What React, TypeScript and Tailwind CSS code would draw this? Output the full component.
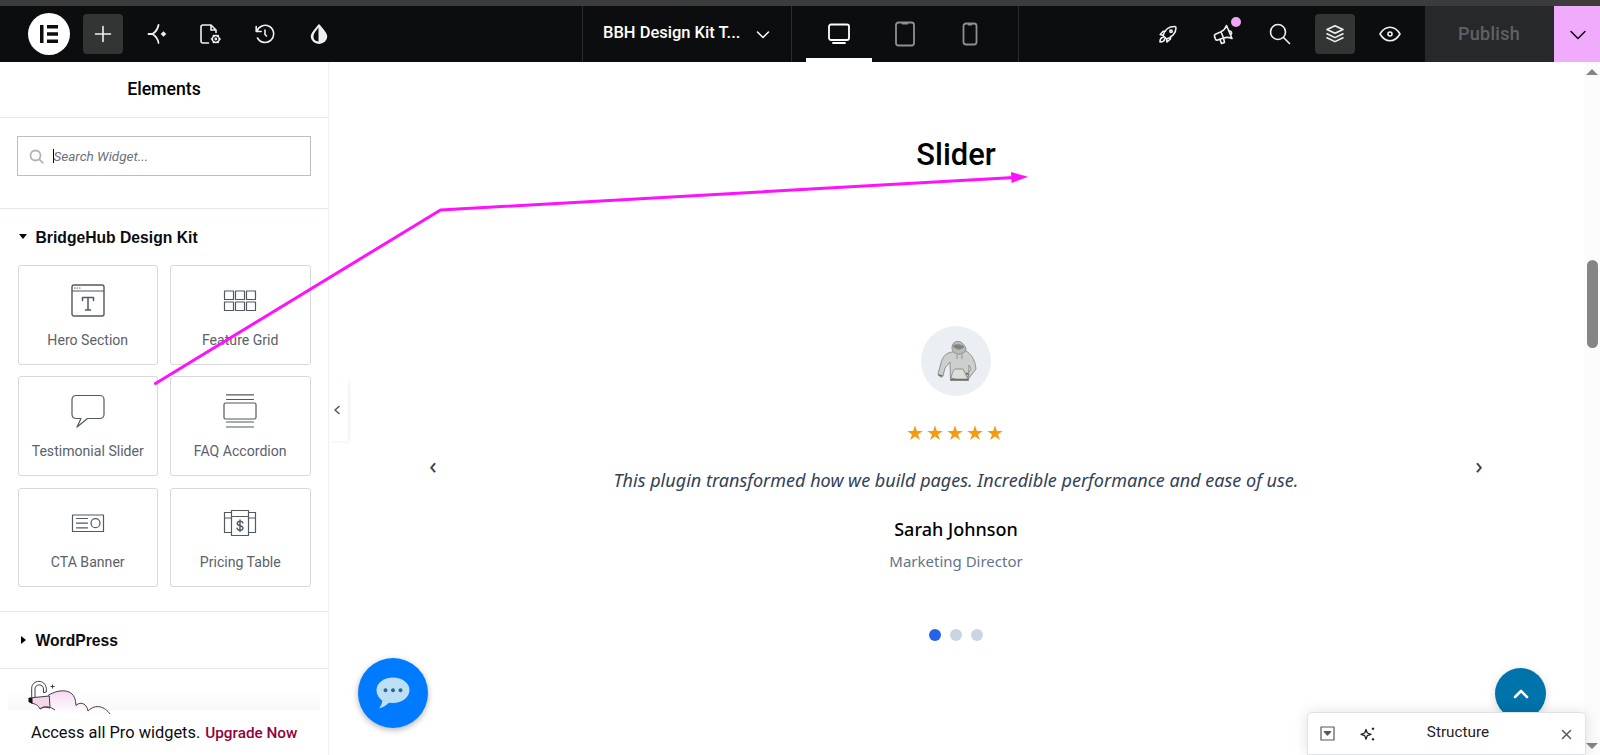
import type { ReactNode } from "react";
import clsx from "clsx";

type IconProps = { className?: string; children: ReactNode; size: number; stroke?: number };

function Icon({ className, children, size, stroke = 1.5 }: IconProps) {
  return (
    <svg
      width={size}
      height={size}
      viewBox={`0 0 ${size} ${size}`}
      fill="none"
      stroke="currentColor"
      strokeWidth={stroke}
      strokeLinecap="round"
      strokeLinejoin="round"
      className={clsx("shrink-0", className)}
      aria-hidden="true"
    >
      {children}
    </svg>
  );
}

const widgets: { title: string; icon: ReactNode }[] = [
  {
    title: "Hero Section",
    icon: (
      <>
        <rect x="1" y="2" width="32" height="31" rx="2" strokeWidth="1.4" />
        <path d="M1 8h32" />
        <path d="M3.5 5h.5M6 5h.5M8.5 5h.5" />
        <path d="M11.500 17.500v-3h11v3M17 14.500v12.500M14.500 27h5" strokeWidth="1.5" />
      </>
    ),
  },
  {
    title: "Feature Grid",
    icon: (
      <>
        <path d="M1.500 8h9v8.500h-9zM12.500 8h9v8.500h-9zM23.500 8h9v8.500h-9z" />
        <path d="M1.500 19h9v8.500h-9zM12.500 19h9v8.500h-9zM23.500 19h9v8.500h-9z" />
      </>
    ),
  },
  {
    title: "Testimonial Slider",
    icon: <path d="M5 1.500h24a4 4 0 0 1 4 4v15a4 4 0 0 1-4 4H16.500L6 33l4-8.500H5a4 4 0 0 1-4-4v-15a4 4 0 0 1 4-4z" />,
  },
  {
    title: "FAQ Accordion",
    icon: (
      <>
        <path d="M3.500.8h27M3.500 5.500h27M3.500 28h27M3.500 33h27" />
        <rect x="1" y="9" width="32" height="16" rx="1.5" />
      </>
    ),
  },
  {
    title: "CTA Banner",
    icon: (
      <>
        <path d="M1.500 9h31v16.500h-31z" />
        <path d="M5.500 12.500h11M5.500 17.200h11M5.500 21.800h11" />
        <circle cx="24.5" cy="17.200" r="4.500" />
      </>
    ),
  },
  {
    title: "Pricing Table",
    icon: (
      <>
        <path d="M8.500 4.500h17v25h-17zM8.500 10.500h17" />
        <path d="M8.500 6.500h-7v20h7M1.500 12h7M25.500 6.500h7v20h-7M25.500 12h7" />
        <path
          d="M20 17c-.5-1.200-1.500-1.700-3-1.700s-2.800.8-2.800 2.200c0 3 5.800 1.500 5.800 4.500 0 1.500-1.300 2.200-3 2.200s-2.700-.7-3-2M17 14v11.500"
          strokeWidth="1.400"
        />
      </>
    ),
  },
];

function ToolButton({ active, children, className }: { active?: boolean; children: ReactNode; className?: string }) {
  return (
    <button
      className={clsx("relative flex size-10 items-center justify-center rounded text-[#f0f0f0]", active && "bg-[#333434]", className)}
    >
      {children}
    </button>
  );
}

function TopBar() {
  return (
    <header className="flex h-[62px] shrink-0 border-t-[6px] border-[#3b3c3b] bg-[#0c0d0e]">
      <div className="flex w-[582px] items-center pl-7">
        <div className="mb-px mr-[13px] mt-px flex size-[42px] items-center justify-center rounded-full bg-white">
          <svg width="18" height="18" viewBox="0 0 18 18" fill="#0c0d0e" aria-hidden="true">
            <path d="M0 0h3.500v18H0zM7 0h11v3.500H7zM7 7.200h11v3.500H7zM7 14.400h11V18H7z" />
          </svg>
        </div>
        <ToolButton active className="mr-[14px]">
          <Icon size={18} stroke={1.600}>
            <path d="M9 1.500v15M1.500 9h15" />
          </Icon>
        </ToolButton>
        <ToolButton className="mr-[13px]">
          <Icon size={20} stroke={1.800}>
            <path d="M11.500 1C10.800 5 8.500 8 5.500 10c3.200 2 5.500 5 6 9M1.500 10h4" />
            <path d="M16.500 7.200 19.300 10l-2.800 2.800-2.800-2.800z" fill="currentColor" stroke="none" />
          </Icon>
        </ToolButton>
        <ToolButton className="mr-[15px]">
          <Icon size={22} stroke={1.600}>
            <path d="M9.500 20H4a2 2 0 0 1-2-2V4a2 2 0 0 1 2-2h8l5 5v2.500M12 2v5h5" />
            <circle cx="16.800" cy="16" r="3.500" />
            <circle cx="16.800" cy="16" r=".6" />
            <path d="M14.500 12.500l.6.9M19.100 12.500l-.6.900M12.500 16h.8M20.300 16h.9M14.500 19.500l.6-.9M19.100 19.500l-.6-.9" />
          </Icon>
        </ToolButton>
        <ToolButton className="mr-[14px]">
          <Icon size={20} stroke={1.600}>
            <path d="M1.800 7.500A8.600 8.600 0 1 1 2.500 14M1.200 2.500v5h5M10 6v4.500l1.500 1.500" />
          </Icon>
        </ToolButton>
        <ToolButton>
          <Icon size={20} stroke={1.500}>
            <path d="M10 1C7.500 4.500 2.500 8.500 2.500 12.500a7.500 6.700 0 0 0 15 0C17.500 8.500 12.500 4.500 10 1z" fill="currentColor" />
            <path d="M9.500 3.500C7.500 6.500 4.500 9 4.500 12.500a5.500 5 0 0 0 5 5z" fill="#0c0d0e" stroke="none" />
          </Icon>
        </ToolButton>
      </div>

      <div className="flex w-[209px] items-center border-l border-[#2b2c2d] pb-px pl-5">
        <span className="w-[140px] whitespace-nowrap text-[16.500px] font-medium text-white">BBH Design Kit T...</span>
        <Icon size={14} className="ml-[13px] mt-0.5 text-white">
          <path d="m1.500 4 5.500 5.500L12.500 4" />
        </Icon>
      </div>

      <div className="flex w-[228px] border-x border-[#2b2c2d] pl-[14px] text-[#8f9091]">
        <button className="flex w-[66px] items-center justify-center border-b-4 border-white pt-1 text-white">
          <Icon size={24} stroke={1.800}>
            <rect x="2" y="2.500" width="20" height="15.500" rx="2" />
            <path d="M6 21h12" />
          </Icon>
        </button>
        <button className="flex w-[65px] items-center justify-center">
          <Icon size={26} stroke={1.800}>
            <rect x="4" y="1.500" width="18" height="23" rx="2.500" />
            <path d="M10.500 2.500h5" />
          </Icon>
        </button>
        <button className="flex w-[66px] items-center justify-center">
          <Icon size={24} stroke={1.800}>
            <rect x="5.500" y="1.500" width="13" height="21" rx="2.500" />
            <path d="M10.500 2.500h3" />
          </Icon>
        </button>
      </div>

      <div className="flex flex-1 items-center justify-end gap-[15px] pr-[15px]">
        <ToolButton>
          <Icon size={20} stroke={1.600}>
            <path d="M5 11.500C6.500 6.500 10.500 2.500 16.500 2.500c1 0 1.500.5 1.500 1.500 0 5-4 9.500-9.500 11zM7.500 7.200H5.200L2.200 10.500l2.800 1M12.500 12.500v2.300L9 18l-.5-3M5 13.500C2.500 13.500 2 15.500 2 18c2.500 0 4.500-.5 4.500-3" />
            <circle cx="13" cy="7.300" r="1.200" />
          </Icon>
        </ToolButton>
        <ToolButton className="ml-px">
          <Icon size={22} stroke={1.600}>
            <path d="m13.500 2.500 5.500 13c-3-1.500-5.500-1.500-8.500-.5l-5.800 2c-1 .3-1.800 0-2.200-.9l-1-2.700c-.3-1 0-1.800.9-2.200L8 8.800c2.800-1.300 4.500-3.300 5.500-6.300zM8 8.800l2.500 6.200M7 16.500l1.500 4 3-1L10.500 15M16.500 8c1.800-.3 2.800 2.200 1.500 3.300" />
          </Icon>
          <span className="absolute right-[3px] top-[3px] size-2.5 rounded-full bg-[#f0a5f7]" />
        </ToolButton>
        <ToolButton className="ml-px">
          <Icon size={22} stroke={1.600}>
            <circle cx="9" cy="9" r="7.500" />
            <path d="m14.500 14.500 6 6" />
          </Icon>
        </ToolButton>
        <ToolButton active>
          <Icon size={20} stroke={1.600}>
            <path d="m10 1.800 8 3.700-8 3.700-8-3.700zM2 9.800l8 3.800 8-3.800M2 13.800l8 3.800 8-3.800" />
          </Icon>
        </ToolButton>
        <ToolButton>
          <Icon size={22} stroke={1.600}>
            <path d="M1 11c5.500-9 14.500-9 20 0-5.500 9-14.500 9-20 0z" />
            <circle cx="11" cy="11" r="2" />
          </Icon>
        </ToolButton>
      </div>

      <button className="flex w-[129px] items-center justify-center bg-[#27282a] pb-px pr-px text-[18px] font-medium tracking-[.3px] text-[#5f6266]">
        Publish
      </button>
      <button className="flex w-[46px] items-center justify-center bg-[#f0abfc] pl-0.5 text-[#0c0d0e]">
        <Icon size={18}>
          <path d="m2 6.500 7 7 7-7" />
        </Icon>
      </button>
    </header>
  );
}

function Cloud() {
  return (
    <svg width="86" height="38" viewBox="0 0 86 38" fill="none" stroke="#403b48" strokeWidth="1" className="relative z-10" aria-hidden="true">
      <defs>
        <linearGradient id="cloud" x1="0" y1="10" x2="0" y2="34" gradientUnits="userSpaceOnUse">
          <stop offset="0" stopColor="#f6d5f1" />
          <stop offset=".45" stopColor="#fbeaf8" />
          <stop offset="1" stopColor="#fff" />
        </linearGradient>
      </defs>
      <path d="M21 15.500c11-7 26-7 27.500 6l.5 4c5-5 11-1 12 5.500 8-8 17-4 22 3-20 4-42 3-60-5z" fill="url(#cloud)" stroke="none" />
      <path d="M21 15.500c11-7 26-7 27.500 6l.5 4c5-5 11-1 12 5.500 8-8 17-4 22 3" />
      <path d="m2 18 20.300-2 .7 12-5-1c-2 0-3.500.500-5 2-1.500-4-5-5-8.500-6z" fill="#f3d6ea" />
      <path d="M1.500 18h4v6l-4-2z" fill="#111" stroke="none" />
      <path d="M4.700 17.500V8.500c0-9.500 14-9.500 14.600 0V12l-2.800.7V9c0-5.500-8.500-5.500-8.500 0v8.200M13 29c4-2.500 9-3.500 15 1" />
      <path d="M25.500 4.500v4M23.500 6.500h4" />
    </svg>
  );
}

function Panel() {
  return (
    <aside className="relative z-10 flex w-[329px] shrink-0 flex-col border-r border-[#f0f1f1] bg-white">
      <h1 className="h-[56px] shrink-0 border-b border-[#e9eaec] pt-[15px] text-center text-[17.700px] font-medium leading-6 text-black">
        Elements
      </h1>
      <div className="h-[91px] shrink-0 border-b border-[#e4e8e9] px-[17.500px] pt-[18px]">
        <div className="-ml-px flex h-10 items-center border border-[#babfc3] pl-[11px]">
          <Icon size={15} stroke={1.800} className="text-[#b0b4b9]">
            <circle cx="6.500" cy="6.500" r="5" />
            <path d="m10.300 10.300 3.500 3.500" />
          </Icon>
          <span className="ml-[9px] h-3.5 border-l border-black text-[13.500px] italic leading-[14px] text-[#6d7278]">
            Search Widget...
          </span>
        </div>
      </div>

      <section className="h-[403px] shrink-0 border-b border-[#e4e8e9] pl-[17.500px] pr-[17.500px]">
        <h2 className="flex h-[56px] items-center pt-px font-['Liberation_Sans',Arial,sans-serif] text-[15.700px] font-bold text-[#0c0d0e]">
          <span className="mb-0.5 ml-px mr-[9px] border-x-4 border-t-[5px] border-x-transparent border-t-black" />
          BridgeHub Design Kit
        </h2>
        <div className="grid grid-cols-2 gap-x-3 gap-y-[11.800px]">
          {widgets.map((widget) => (
            <button
              key={widget.title}
              className="flex h-[99.500px] flex-col items-center rounded-[3px] border border-[#d5d8dc] pt-[17.200px] text-[#515962]"
            >
              <Icon size={34} stroke={1.200}>
                {widget.icon}
              </Icon>
              <span className="mt-[12.500px] whitespace-nowrap text-[14.100px] leading-5 text-[#5b626a]">{widget.title}</span>
            </button>
          ))}
        </div>
      </section>

      <h2 className="flex h-[57px] shrink-0 items-center border-b border-[#e4e8e9] pl-[17.500px] pt-px font-['Liberation_Sans',Arial,sans-serif] text-[15.700px] font-bold text-[#0c0d0e]">
        <span className="mb-0.5 ml-[3px] mr-[10px] border-y-4 border-l-[5px] border-y-transparent border-l-black" />
        WordPress
      </h2>

      <div className="h-[41px] shrink-0 px-2">
        <div className="h-full bg-linear-to-b from-white from-50% to-[#f8f8f8] pl-[19px] pt-[11px]">
          <Cloud />
        </div>
      </div>
      <p className="flex h-[45px] items-center whitespace-nowrap bg-white pl-[31px] text-[16.400px] leading-5 text-[#0c0d0e]">
        Access all Pro widgets.
        <b className="ml-[5px] mt-px text-[15.300px] font-medium text-[#93003c]">Upgrade Now</b>
      </p>

      <button className="absolute left-[329px] top-[319px] flex h-[60px] w-[19px] items-center justify-center bg-white pb-0.5 pr-[3px] text-[#515962] shadow-[2px_1px_3px_rgba(0,0,0,.06)]">
        <Icon size={10} stroke={1.600}>
          <path d="M7 1.500 3 5l4 3.500" />
        </Icon>
      </button>
    </aside>
  );
}

function Hoodie() {
  return (
    <svg width="70" height="70" viewBox="0 0 70 70" stroke="#8f918e" strokeWidth="1" strokeLinejoin="round" aria-hidden="true">
      <path d="M31 26c-6 1-9 4-11 11l-3 11c1 3 4 4 5 2l2-8 5-6 .500 18.500h18l.500-15.500 2 4-5 6 3 3 7-9c-1-10-5-15-10-18z" fill="#cdcfcc" />
      <path d="M31 22c0-9 11-9 14 1 0 3-3 4-6 5-4 1-8-2-8-6z" fill="#b9bbb8" />
      <path d="M32 20c3-2 8-2 11 1-3 3-8 3-11-1z" fill="#7d807c" />
      <path d="M30 52c1-4 2-8 4-9h8l3 6 2 4c-5 1-12 1-17-1z" fill="#dcdedb" />
      <path d="M36 29v4M41 28v5" fill="none" />
      <path d="M29.500 53.500h18M17.500 49l4 1M45 47l3 2" fill="none" stroke="#6c6f6b" strokeWidth="1.500" />
    </svg>
  );
}

function Canvas() {
  return (
    <main className="flex flex-1 flex-col items-center bg-white pr-px font-['Noto_Sans','Open_Sans',sans-serif]">
      <h2 className="pt-[75px] font-[Roboto,sans-serif] text-[30.900px] font-medium leading-9 text-black">Slider</h2>
      <div className="mt-[153px] flex w-full items-center px-[99px]">
        <button className="mt-[30px] w-[10px] text-[24px] leading-6 text-[#334155]">‹</button>
        <div className="flex flex-1 flex-col items-center">
          <div className="flex size-[70px] items-center justify-center rounded-full bg-[#ebeff3]">
            <Hoodie />
          </div>
          <div className="mr-0.5 mt-[29px] flex gap-1 text-[#f79a10]">
            {[0, 1, 2, 3, 4].map((i) => (
              <svg key={i} width="16" height="16" viewBox="0 0 16 16" fill="currentColor" aria-hidden="true">
                <path d="m8 .3 1.900 5.600h5.900L11 9.400l1.900 5.700L8 11.600l-4.900 3.500L5 9.400.2 5.900h5.900z" />
              </svg>
            ))}
          </div>
          <p className="mt-6 whitespace-nowrap text-[18.050px] italic leading-[30px] text-[#334155]">
            This plugin transformed how we build pages. Incredible performance and ease of use.
          </p>
          <p className="mt-[22px] text-[18px] font-medium leading-6 text-black">Sarah Johnson</p>
          <p className="mt-2 text-[15px] leading-6 text-[#64748b]">Marketing Director</p>
        </div>
        <button className="mt-[30px] w-[10px] text-[24px] leading-6 text-[#334155]">›</button>
      </div>
      <div className="mt-14 flex gap-[9px]">
        <span className="size-3 rounded-full bg-[#2563eb]" />
        <span className="size-3 rounded-full bg-[#cbd5e1]" />
        <span className="size-3 rounded-full bg-[#cbd5e1]" />
      </div>
    </main>
  );
}

function ScrollBar() {
  return (
    <div className="flex w-4 shrink-0 flex-col items-center bg-[#fcfcfc]">
      <span className="mt-[7px] border-x-[6px] border-b-[6px] border-x-transparent border-b-[#858585]" />
      <span className="mt-[185px] h-[88px] w-[11px] rounded-full bg-[#858585]" />
      <span className="mb-[6px] mt-auto border-x-[6px] border-t-[6px] border-x-transparent border-t-[#858585]" />
    </div>
  );
}

function StructureBar() {
  return (
    <div className="absolute bottom-0 left-[1307px] z-20 flex h-[43px] w-[279px] items-center rounded-t-[5px] border border-[#e0e2e5] bg-white px-3 text-[#515962] shadow-[0_0_14px_rgba(0,0,0,.12)]">
      <Icon size={15} stroke={1.200}>
        <rect x="1" y="1" width="13" height="13" />
        <path d="M4.300 5.500h6.400L7.500 9z" fill="currentColor" />
      </Icon>
      <Icon size={16} stroke={1.300} className="ml-[25px] text-[#1f2124]">
        <path d="M6 3.500 7.300 7l3.700 1.300-3.700 1.300L6 13.200 4.700 9.600 1 8.300 4.700 7z" />
        <path d="m13 1.300 1.500 1.500L13 4.300l-1.500-1.500zM13 11.800l1.500 1.500-1.500 1.500-1.500-1.500z" fill="currentColor" stroke="none" />
      </Icon>
      <span className="flex-1 pb-0.5 pr-[21px] text-center text-[15.300px] text-[#1f2124]">Structure</span>
      <Icon size={11} stroke={1.500} className="mr-px mt-0.5">
        <path d="m1.500 1.500 8 8M9.500 1.500l-8 8" />
      </Icon>
    </div>
  );
}

export default function App() {
  return (
    <div className="relative flex h-[755px] w-[1600px] flex-col overflow-hidden bg-white font-[Roboto,sans-serif]">
      <TopBar />
      <div className="flex min-h-0 flex-1">
        <Panel />
        <Canvas />
        <ScrollBar />
      </div>

      <button className="absolute left-[358px] top-[658px] flex size-[70px] items-center justify-center rounded-full bg-[#007bff] shadow-[0_2px_6px_rgba(0,0,0,.3)]">
        <svg width="34" height="32" viewBox="0 0 34 32" aria-hidden="true">
          <path d="M17 .5c9.200 0 16.500 5.500 16.500 12.500S26.200 26 17 26l-4-.3C10.500 28 7 30.500 3 31.500c1.500-2 3-4.500 3.300-8C2.800 21.200.5 17 .5 13 .5 6 7.800.5 17 .5z" fill="#bddff5" />
          <path d="M9.500 11.200a2 2 0 1 0 .01 0zM17 11.200a2 2 0 1 0 .01 0zM24.500 11.200a2 2 0 1 0 .01 0z" fill="#2a6797" />
        </svg>
      </button>

      <button className="absolute left-[1495px] top-[668px] flex size-[51px] items-center justify-center rounded-full bg-[#0073aa] text-white shadow-[0_2px_8px_rgba(0,0,0,.15)]">
        <Icon size={16} stroke={2.600}>
          <path d="m2 11 6-6 6 6" />
        </Icon>
      </button>
      <StructureBar />

      <svg className="pointer-events-none absolute inset-0 z-30" width="1600" height="755" fill="none" aria-hidden="true">
        <path d="m155.500 383.500 285-173.500L1014 177.500" stroke="#ff10ff" strokeWidth="3" strokeLinecap="round" strokeLinejoin="round" />
        <path d="m1011 172 17 4.800-16.500 6.200z" fill="#ff10ff" />
      </svg>
    </div>
  );
}
